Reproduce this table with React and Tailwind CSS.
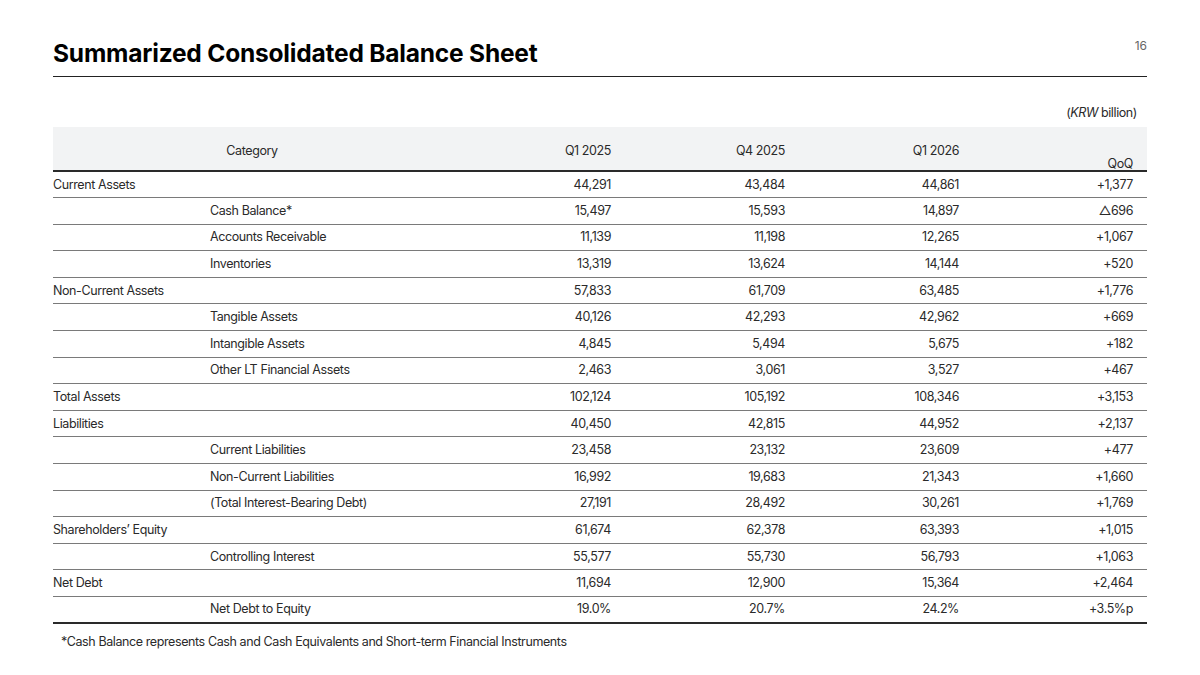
const ROWS = [
  { label: 'Current Assets', v: ['44,291', '43,484', '44,861', '+1,377'] },
  { label: 'Cash Balance*', sub: true, v: ['15,497', '15,593', '14,897', '△696'] },
  { label: 'Accounts Receivable', sub: true, v: ['11,139', '11,198', '12,265', '+1,067'] },
  { label: 'Inventories', sub: true, v: ['13,319', '13,624', '14,144', '+520'] },
  { label: 'Non-Current Assets', v: ['57,833', '61,709', '63,485', '+1,776'] },
  { label: 'Tangible Assets', sub: true, v: ['40,126', '42,293', '42,962', '+669'] },
  { label: 'Intangible Assets', sub: true, v: ['4,845', '5,494', '5,675', '+182'] },
  { label: 'Other LT Financial Assets', sub: true, v: ['2,463', '3,061', '3,527', '+467'] },
  { label: 'Total Assets', v: ['102,124', '105,192', '108,346', '+3,153'] },
  { label: 'Liabilities', v: ['40,450', '42,815', '44,952', '+2,137'] },
  { label: 'Current Liabilities', sub: true, v: ['23,458', '23,132', '23,609', '+477'] },
  { label: 'Non-Current Liabilities', sub: true, v: ['16,992', '19,683', '21,343', '+1,660'] },
  { label: '(Total Interest-Bearing Debt)', sub: true, v: ['27,191', '28,492', '30,261', '+1,769'] },
  { label: 'Shareholders’ Equity', v: ['61,674', '62,378', '63,393', '+1,015'] },
  { label: 'Controlling Interest', sub: true, v: ['55,577', '55,730', '56,793', '+1,063'] },
  { label: 'Net Debt', v: ['11,694', '12,900', '15,364', '+2,464'] },
  { label: 'Net Debt to Equity', sub: true, v: ['19.0%', '20.7%', '24.2%', '+3.5%p'] },
];

const GRID = 'grid grid-cols-[398px_174px_174px_174px_174px]';

export default function App() {
  return (
    <div
      className="w-[1200px] h-[675px] bg-white text-[#2a2a2a] relative overflow-hidden"
      style={{ fontFamily: 'Inter, "Noto Sans", sans-serif' }}
    >
      <div className="px-[53px] pt-[38px]">
        {/* Header */}
        <div className="flex items-end justify-between border-b-[1.5px] border-[#222] pb-[8px]">
          <h1 className="text-[24.5px] leading-[30px] font-bold tracking-[-0.2px] text-black">
            Summarized Consolidated Balance Sheet
          </h1>
        </div>
        <span className="absolute right-[53px] top-[37px] text-[12px] text-[#666]">16</span>

        <div className="flex justify-end pr-[10px] pt-[27px] pb-[5px] text-[12.5px] leading-[18px] tracking-[-0.4px]">
          (<i>KRW</i>&nbsp;billion)
        </div>

        {/* Table */}
        <div className="text-[12.5px] leading-[16px] tracking-[-0.4px]">
          <div className={`${GRID} h-[45px] bg-[#f2f3f4] border-b-2 border-[#2a2a2a]`}>
            <div className="flex items-center justify-center pt-[5px]">Category</div>
            <div className="flex items-center justify-end pr-[14px] pt-[5px]">Q1 2025</div>
            <div className="flex items-center justify-end pr-[14px] pt-[5px]">Q4 2025</div>
            <div className="flex items-center justify-end pr-[14px] pt-[5px]">Q1 2026</div>
            <div className="flex items-end justify-end pr-[14px] pb-0">
              <span className="translate-y-[2px]">QoQ</span>
            </div>
          </div>
          {ROWS.map((r, i) => (
            <div
              key={r.label}
              className={`${GRID} ${i === 0 ? 'h-[26px]' : 'h-[26.6px]'} border-b ${
                i === ROWS.length - 1 ? 'border-b-2 border-[#2a2a2a]' : 'border-[#7a7a7a]'
              }`}
            >
              <div className={`flex items-center ${r.sub ? 'pl-[157px]' : ''}`}>{r.label}</div>
              {r.v.map((x, j) => (
                <div key={j} className="flex items-center justify-end pr-[14px]">
                  {x}
                </div>
              ))}
            </div>
          ))}
        </div>

        <p className="pl-[8px] pt-[10px] text-[12.5px] leading-[16px] tracking-[-0.4px]">
          *Cash Balance represents Cash and Cash Equivalents and Short-term Financial Instruments
        </p>
      </div>
    </div>
  );
}
